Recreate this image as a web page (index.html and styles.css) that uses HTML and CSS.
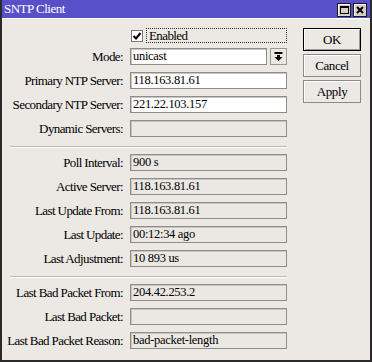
FILE: index.html
```html
<!DOCTYPE html>
<html>
<head>
<meta charset="utf-8">
<link rel="stylesheet" href="styles.css">
</head>
<body>
<div class="window">
  <div class="titlebar">
    <span class="title">SNTP Client</span>
    <div class="tbtns">
      <span class="tbtn"><span class="maxbox"></span></span>
      <span class="tbtn">
        <svg width="8" height="8" viewBox="0 0 8 8"><path d="M1 1 L7 7 M7 1 L1 7" stroke="#000" stroke-width="2" fill="none"/></svg>
      </span>
    </div>
  </div>
  <div class="content">
    <div class="form">
      <div class="row check-row">
        <span class="label"></span>
        <div class="field check-field">
          <span class="checkbox">
            <svg width="10" height="10" viewBox="0 0 10 10"><path d="M1.5 5 L4 7.5 L8.5 2" stroke="#000" stroke-width="2" fill="none"/></svg>
          </span>
          <span class="focus">Enabled</span>
        </div>
      </div>
      <div class="row">
        <span class="label">Mode:</span>
        <div class="field select-field">
          <span class="input white select-input">unicast</span>
          <span class="drop">
            <svg width="9" height="9" viewBox="0 0 9 9"><rect x="0.5" y="0" width="8" height="2" fill="#000"/><rect x="3" y="3" width="3" height="2" fill="#000"/><path d="M0.5 5 L8.5 5 L4.5 9 Z" fill="#000"/></svg>
          </span>
        </div>
      </div>
      <div class="row">
        <span class="label">Primary NTP Server:</span>
        <div class="field"><span class="input white">118.163.81.61</span></div>
      </div>
      <div class="row">
        <span class="label">Secondary NTP Server:</span>
        <div class="field"><span class="input white">221.22.103.157</span></div>
      </div>
      <div class="row">
        <span class="label">Dynamic Servers:</span>
        <div class="field"><span class="input"></span></div>
      </div>
      <div class="sep"></div>
      <div class="row">
        <span class="label">Poll Interval:</span>
        <div class="field"><span class="input">900 s</span></div>
      </div>
      <div class="row">
        <span class="label">Active Server:</span>
        <div class="field"><span class="input">118.163.81.61</span></div>
      </div>
      <div class="row">
        <span class="label">Last Update From:</span>
        <div class="field"><span class="input">118.163.81.61</span></div>
      </div>
      <div class="row">
        <span class="label">Last Update:</span>
        <div class="field"><span class="input">00:12:34 ago</span></div>
      </div>
      <div class="row">
        <span class="label">Last Adjustment:</span>
        <div class="field"><span class="input">10 893 us</span></div>
      </div>
      <div class="sep"></div>
      <div class="row">
        <span class="label">Last Bad Packet From:</span>
        <div class="field"><span class="input">204.42.253.2</span></div>
      </div>
      <div class="row">
        <span class="label">Last Bad Packet:</span>
        <div class="field"><span class="input"></span></div>
      </div>
      <div class="row">
        <span class="label">Last Bad Packet Reason:</span>
        <div class="field"><span class="input">bad-packet-length</span></div>
      </div>
    </div>
    <div class="buttons">
      <span class="btn default">OK</span>
      <span class="btn">Cancel</span>
      <span class="btn">Apply</span>
    </div>
  </div>
</div>
</body>
</html>
```

FILE: styles.css
```css
* { box-sizing: border-box; }
html, body { margin: 0; padding: 0; }
body {
  width: 372px;
  height: 362px;
  overflow: hidden;
  background: #ece9e5;
  font-family: "Liberation Serif", "Times New Roman", serif;
  font-size: 13px;
  letter-spacing: -0.6px;
  color: #000;
}
.window {
  width: 372px;
  height: 362px;
  border: 2px solid #2a2a2a;
  border-top: 0;
  background: #ece9e5;
  display: flex;
  flex-direction: column;
}
.titlebar {
  height: 18px;
  background: #5850c8;
  display: flex;
  align-items: center;
  justify-content: space-between;
  padding: 0 3px 0 2px;
  flex: none;
}
.title {
  color: #fff;
  font-size: 13px;
  line-height: 14px;
  letter-spacing: -0.5px;
}
.tbtns { display: flex; gap: 2px; margin-top: 1px; }
.tbtn {
  width: 14px;
  height: 14px;
  background: #d4d0c8;
  border: 1px solid #1a1a1a;
  box-shadow: inset 1px 1px 0 #fff;
  display: flex;
  align-items: center;
  justify-content: center;
}
.maxbox {
  width: 9px;
  height: 8px;
  border: 1px solid #000;
  border-top-width: 2px;
}
.content {
  flex: 1;
  border-top: 1px solid #fff;
  display: flex;
  padding: 9px 0 0 3px;
}
.form {
  display: flex;
  flex-direction: column;
  width: 282px;
}
.row {
  display: flex;
  height: 17px;
  align-items: center;
}
.row + .row { margin-top: 7px; }
.check-row { height: 15px; margin-bottom: -2px; }
.label {
  width: 118px;
  text-align: right;
  white-space: nowrap;
  line-height: 17px;
  flex: none;
}
.field {
  margin-left: 7px;
  width: 157px;
  height: 17px;
  display: flex;
}
.check-field { height: 15px; align-items: center; }
.checkbox {
  width: 12px;
  height: 12px;
  margin-left: 1px;
  background: #fff;
  border: 1px solid #7a7a7a;
  display: flex;
  align-items: center;
  justify-content: center;
  flex: none;
}
.focus {
  margin-left: 3px;
  flex: 1;
  height: 15px;
  border: 1px dotted #333;
  padding-left: 2px;
  line-height: 13px;
}
.input {
  flex: 1;
  height: 17px;
  border: 1px solid #8f8d8a;
  box-shadow: inset 1px 1px 0 #c9c6c2;
  background: #ebe8e4;
  padding-left: 2px;
  line-height: 15px;
  font-size: 12.5px;
  letter-spacing: -0.3px;
  white-space: nowrap;
  overflow: hidden;
}
.input.white { background: #fff; }
.select-field { gap: 3px; }
.drop {
  width: 17px;
  height: 17px;
  flex: none;
  border: 1px solid #9a9895;
  background: #ebe8e4;
  display: flex;
  align-items: center;
  justify-content: center;
}
.sep {
  margin: 9px 0 6px 5px;
  width: 277px;
  height: 2px;
  border-top: 1px solid #bcb8b4;
  border-bottom: 1px solid #fff;
}
.buttons {
  display: flex;
  flex-direction: column;
  gap: 3px;
  margin-left: 16px;
}
.btn {
  width: 58px;
  height: 23px;
  border: 1px solid #8a8a8a;
  box-shadow: inset 1px 1px 0 #fff;
  background: #ece9e5;
  display: flex;
  align-items: center;
  justify-content: center;
  letter-spacing: -0.4px;
}
.btn.default {
  border-color: #000;
  box-shadow: inset 1px 1px 0 #fff, inset -1px -1px 0 #9a9a9a;
}
```
